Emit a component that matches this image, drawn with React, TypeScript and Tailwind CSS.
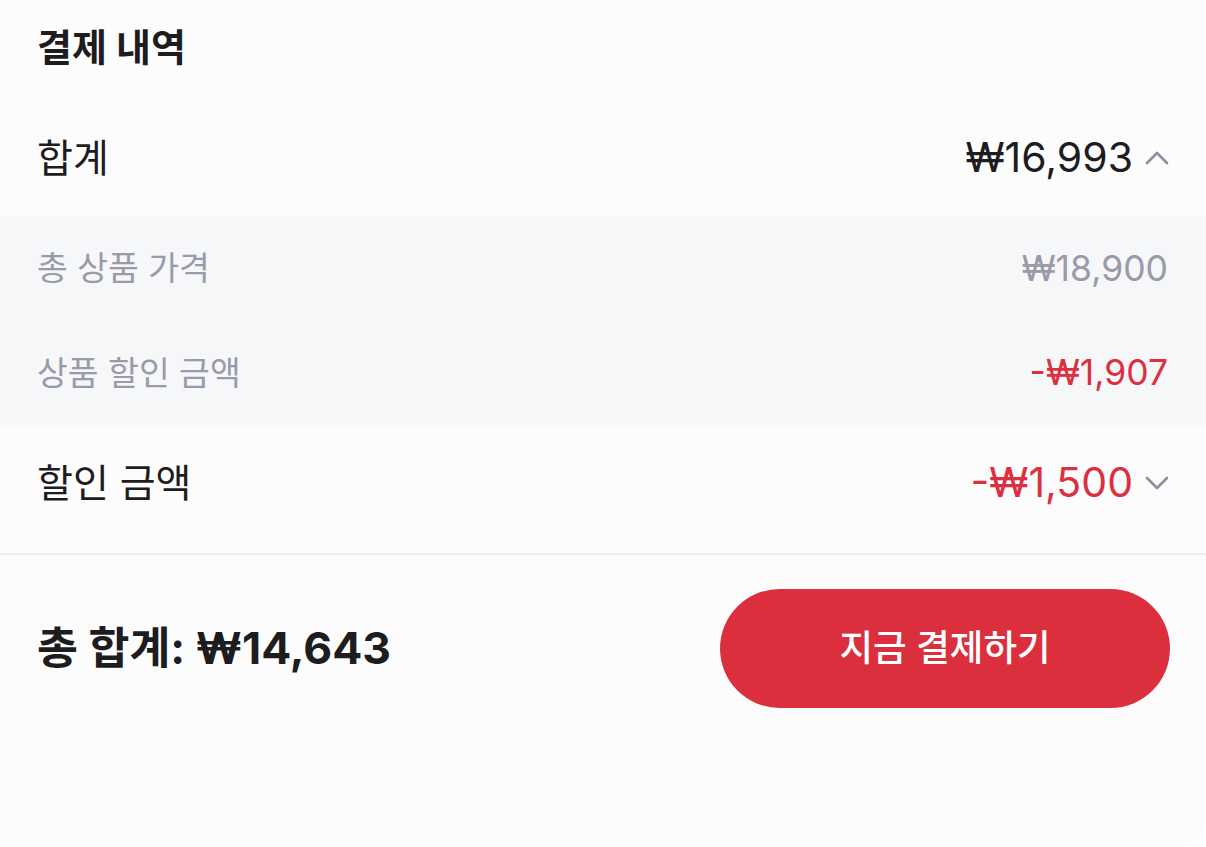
import React from 'react';

const Chevron: React.FC<{ up?: boolean }> = ({ up }) => (
  <svg width="24" height="14" viewBox="0 0 24 14" fill="none" className="ml-3 shrink-0">
    <path
      d={up ? 'M2 12L12 2L22 12' : 'M2 2L12 12L22 2'}
      stroke="#8e8e9c"
      strokeWidth="2.6"
      strokeLinecap="round"
      strokeLinejoin="round"
    />
  </svg>
);

const Row: React.FC<{ label: string; value: string; red?: boolean; chevron?: 'up' | 'down' }> = ({ label, value, red, chevron }) => (
  <div className="flex items-center justify-between px-[37px] h-[116px]">
    <span className="text-[39px] text-[#1d1d1f]">{label}</span>
    <div className="flex items-center">
      <span className={red ? 'text-[41px] text-[#dc2f3f]' : 'text-[41px] text-[#1d1d1f]'}>{value}</span>
      <Chevron up={chevron === 'up'} />
    </div>
  </div>
);

const SubRow: React.FC<{ label: string; value: string; red?: boolean }> = ({ label, value, red }) => (
  <div className="flex items-center justify-between pl-[37px] pr-[38px] h-[104.5px]">
    <span className="text-[33.5px] text-[#9a9aa8]">{label}</span>
    <span className={red ? 'text-[35.5px] text-[#dc2f3f]' : 'text-[35.5px] text-[#9a9aa8]'}>{value}</span>
  </div>
);

export default function App() {
  return (
    <div
      className="w-[1206px] h-[847px] bg-[#fcfcfd] overflow-hidden rounded-br-[28px]"
      style={{ fontFamily: 'Inter, "Noto Sans CJK KR", sans-serif' }}
    >
      <div className="h-[100px] px-[37px] pt-[18px]">
        <h1 className="text-[38px] font-bold text-[#1d1d1f] leading-[58px]">결제 내역</h1>
      </div>

      <Row label="합계" value="₩16,993" chevron="up" />

      <div className="bg-[#f6f7f9]">
        <SubRow label="총 상품 가격" value="₩18,900" />
        <SubRow label="상품 할인 금액" value="-₩1,907" red />
      </div>

      <Row label="할인 금액" value="-₩1,500" red chevron="down" />

      <div className="mt-[12px] h-[2px] bg-[#efeff1]" />

      <div className="flex items-center justify-between pl-[37px] pr-[36px] pt-[34px]">
        <span className="text-[44.5px] font-bold text-[#1d1d1f]">총 합계: ₩14,643</span>
        <button className="w-[450px] h-[119px] rounded-[60px] bg-[#db2f3e] text-white text-[36.5px] font-medium">
          지금 결제하기
        </button>
      </div>
    </div>
  );
}
